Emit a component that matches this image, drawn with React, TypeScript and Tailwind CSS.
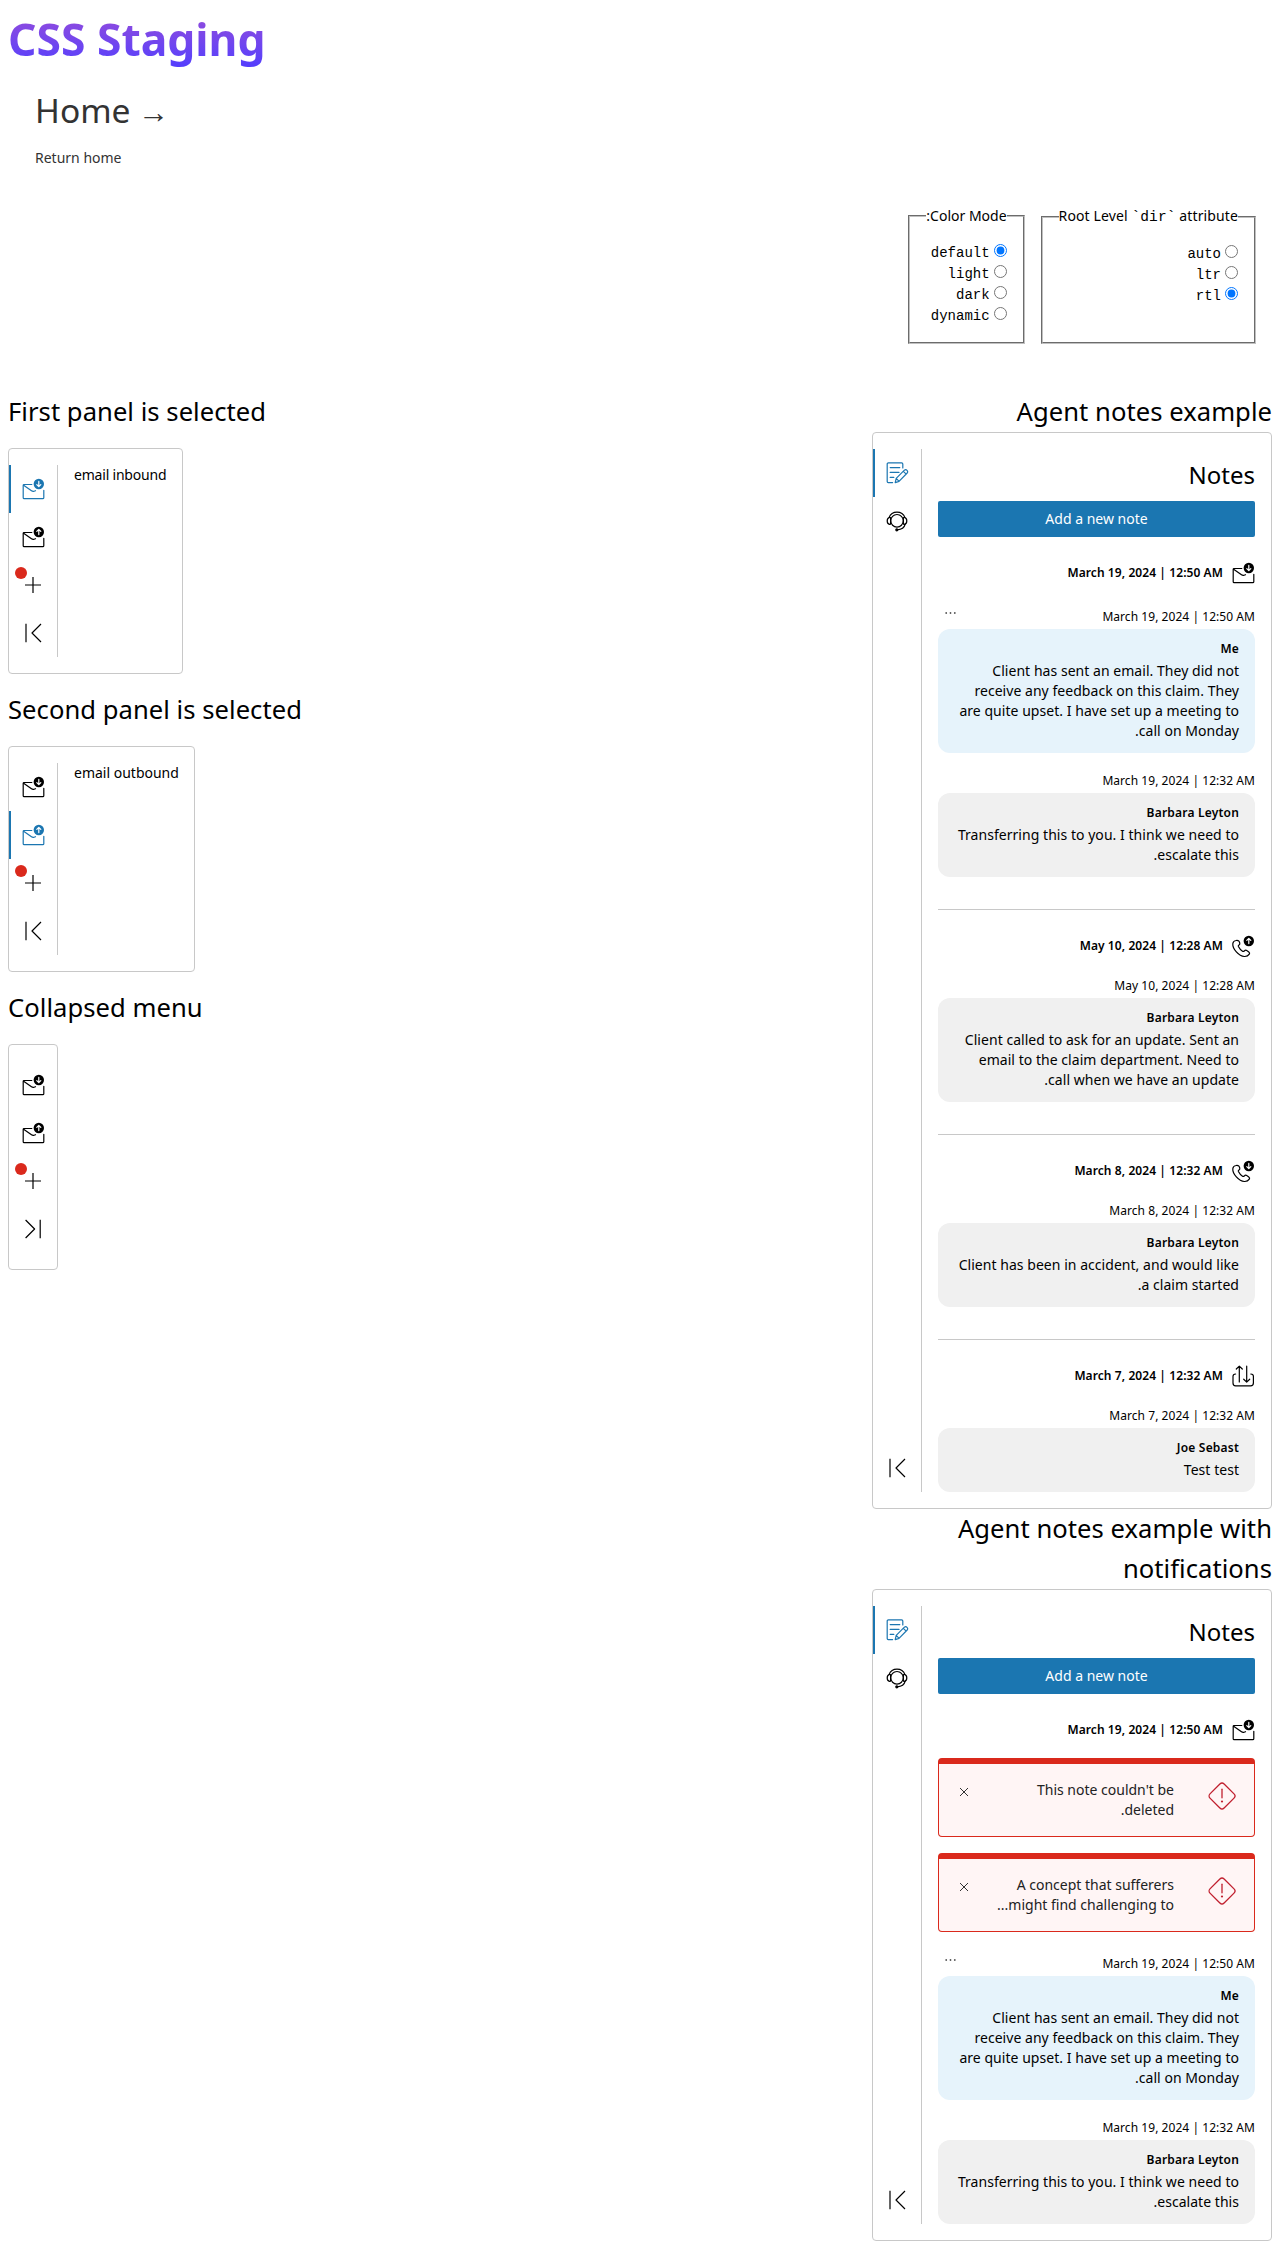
import type { ReactNode } from 'react';

function Svg({ children, size = 24 }: { children: ReactNode; size?: number }) {
  return (
    <svg
      width={size}
      height={size}
      viewBox="0 0 24 24"
      fill="none"
      stroke="currentColor"
      strokeWidth="1.2"
      strokeLinecap="round"
      strokeLinejoin="round"
      className="shrink-0"
    >
      {children}
    </svg>
  );
}

function Badge({ dir }: { dir: 'up' | 'down' }) {
  return (
    <>
      <circle cx="17.8" cy="7" r="5.2" fill="currentColor" stroke="none" />
      <path
        d={dir === 'down' ? 'M17.8 4.4v5M15.8 7.6l2 2 2-2' : 'M17.8 9.6v-5M15.8 6.4l2-2 2 2'}
        stroke="#fff"
      />
    </>
  );
}

function MailIcon({ dir }: { dir: 'up' | 'down' }) {
  return (
    <Svg>
      <path d="M10.8 7.5H3.2a1 1 0 0 0-1 1v12.2a1 1 0 0 0 1 1h18.6a1 1 0 0 0 1-1v-7.4" />
      <path d="M2.6 8.2l7.9 5.6q1.3.9 2.6.4l1.4-.5" />
      <Badge dir={dir} />
    </Svg>
  );
}

function PhoneIcon({ dir }: { dir: 'up' | 'down' }) {
  return (
    <Svg>
      <path d="M5 6.5C3.400 6.700 2 8 1.800 9.700c-.4 5 6 12.400 11.600 12.800 1.800.1 3.900-.8 4.900-2.300.5-.8.2-1.800-.5-2.300l-2-1.400c-.8-.6-1.800-.4-2.400.3-.5.6-1.200.9-1.900.4-1.600-1-3.200-2.800-4.100-4.600-.3-.7 0-1.300.6-1.700.8-.5 1-1.400.7-2.200l-.8-1.600C7.400 6.600 6.300 6.300 5 6.500z" />
      <Badge dir={dir} />
    </Svg>
  );
}

function TransferIcon() {
  return (
    <Svg>
      <path d="M4.600 10C2.800 10 2 10.600 2 12.300V19c0 1.800.9 2.800 2.600 2.800h15c1.700 0 2.800-1 2.800-2.800v-6.700c0-1.700-.8-2.300-2.600-2.300" />
      <path d="M8.300 18V2.200M5.300 5l3-2.900 3 2.900M15.700 2.200V18M12.700 15.200l3 2.900 3-2.900" />
    </Svg>
  );
}

function NotesIcon() {
  return (
    <Svg>
      <path d="M7.600 21.600H3.200a1 1 0 0 1-1-1V3a1.200 1.200 0 0 1 1.200-1.200h13.200A1.200 1.200 0 0 1 17.800 3v4" />
      <path d="M5.200 6.600h9.600M5.200 11.400h8.800M5.200 16.400h3.600" />
      <path d="M10.200 21.600l1-4.200 8.200-8.200a2 2 0 0 1 2.800 2.800L14 20.400zM11.400 17.600l2.500 2.500M18.400 10.400l2.500 2.500" />
    </Svg>
  );
}

function HeadsetIcon() {
  return (
    <Svg>
      <circle cx="12" cy="11.800" r="6.300" />
      <path d="M4 8.600a8.600 8.600 0 0 1 16 0M4.600 8.400C3 8.800 2.200 10 2.200 11.900s.8 3 2.400 3.400c.6.100 1-.2 1-.7V9c0-.5-.4-.8-1-.6zM19.400 8.400c1.600.4 2.400 1.600 2.400 3.500s-.8 3-2.400 3.400c-.6.100-1-.2-1-.7V9c0-.5.4-.8 1-.6z" />
      <path d="M20.200 15.200c-.8 3.400-3.400 5.400-8 5.600" />
      <circle cx="11.800" cy="20.800" r="1" fill="currentColor" />
    </Svg>
  );
}

function PlusIcon() {
  return (
    <Svg>
      <path d="M12 4v16M4 12h16" strokeLinecap="butt" />
    </Svg>
  );
}

function CollapseIcon() {
  return (
    <Svg>
      <path d="M5 2.800v18.400M20 3l-9 9 9 9" strokeLinecap="butt" />
    </Svg>
  );
}

function ExpandIcon() {
  return (
    <Svg>
      <path d="M19.200 2.800v18.400M4.600 3l9 9-9 9" strokeLinecap="butt" />
    </Svg>
  );
}

function Tab({ children, active, dot }: { children: ReactNode; active?: boolean; dot?: boolean }) {
  return (
    <button
      className={
        active
          ? 'relative flex size-12 items-center justify-center text-[#1b76b1]'
          : 'relative flex size-12 items-center justify-center text-black'
      }
    >
      {active && <span className="absolute inset-y-0 left-0 w-0.5 bg-[#1b76b1]" />}
      {dot && <span className="absolute top-1.5 left-1.5 size-3 rounded-full bg-[#da291c]" />}
      {children}
    </button>
  );
}

function Panel({ tabs, children }: { tabs: ReactNode; children?: ReactNode }) {
  return (
    <div dir="ltr" className="flex w-fit rounded border border-[#c8c8c8] py-4">
      <div className="flex w-12 flex-col">{tabs}</div>
      {children && <div className="border-l border-[#c8c8c8] px-4">{children}</div>}
    </div>
  );
}

function Heading({ children }: { children: ReactNode }) {
  return <h2 className="text-[25.600px] leading-10 tracking-[0.040px]">{children}</h2>;
}

function EmailPanel({ title, children, selected }: { title: string; children?: ReactNode; selected?: number }) {
  return (
    <section className="flex flex-col gap-4">
      <Heading>{title}</Heading>
      <Panel
        tabs={
          <>
            <Tab active={selected === 0}>
              <MailIcon dir="down" />
            </Tab>
            <Tab active={selected === 1}>
              <MailIcon dir="up" />
            </Tab>
            <Tab dot>
              <PlusIcon />
            </Tab>
            <Tab>{children ? <CollapseIcon /> : <ExpandIcon />}</Tab>
          </>
        }
      >
        {children}
      </Panel>
    </section>
  );
}

function Note({ date, author, text, mine }: { date: string; author: string; text: string; mine?: boolean }) {
  return (
    <div className="pt-[19px]">
      <div className={mine ? 'flex justify-between pt-1' : 'flex justify-between'}>
        <span className="text-xs leading-[18px] tracking-[0.050px]">{date}</span>
        {mine && (
          <button className="-mt-px ml-[7px] h-3 w-[11px] text-[#555]">
            <svg width="11" height="12" viewBox="0 0 11 12" fill="currentColor">
              <circle cx="1.200" cy="6" r="0.900" />
              <circle cx="5.500" cy="6" r="0.900" />
              <circle cx="9.800" cy="6" r="0.900" />
            </svg>
          </button>
        )}
      </div>
      <div
        className={
          mine
            ? 'mt-[3px] rounded-xl bg-[#e6f3fb] px-4 pt-[11px] pb-3'
            : 'mt-[3px] rounded-xl bg-[#f0f0f0] px-4 pt-[11px] pb-3'
        }
      >
        <p className="mb-[3px] text-xs leading-[18px] font-semibold tracking-[0.200px]">{author}</p>
        <p className="tracking-[0.040px] whitespace-pre-line">{text}</p>
      </div>
    </div>
  );
}

function Group({ date, icon, children }: { date: string; icon: ReactNode; children: ReactNode }) {
  return (
    <section className="border-[#c8c8c8] pt-6 not-last:mb-8 not-first:border-t">
      <header className="flex items-center gap-2">
        {icon}
        <h4 className="text-xs leading-[18px] font-semibold tracking-[0.080px]">{date}</h4>
      </header>
      {children}
    </section>
  );
}

function Alert({ lines }: { lines: string[] }) {
  return (
    <div
      role="alert"
      className="mt-4 flex rounded border border-t-6 border-[#da291c] bg-[#fff5f5] py-4 pr-[18px] pl-5 text-[#222]"
    >
      <svg
        width="28"
        height="32"
        viewBox="0 0 28 32"
        fill="none"
        stroke="#c01f2e"
        strokeWidth="1.300"
        strokeLinecap="round"
        className="shrink-0"
      >
        <rect x="4" y="6" width="20" height="20" rx="3" transform="rotate(45 14 16)" />
        <path d="M14 9.200v8.600" />
        <circle cx="14" cy="21.500" r="1.100" fill="#c01f2e" stroke="none" />
      </svg>
      <p className="mr-[34px] grow">
        {lines.map((line) => (
          <span key={line} className="block">
            {line}
          </span>
        ))}
      </p>
      <svg width="10" height="24" viewBox="0 0 10 24" stroke="#333" strokeWidth="1" className="shrink-0">
        <path d="M1 8l8 8M9 8l-8 8" />
      </svg>
    </div>
  );
}

function NotesPanel({ children }: { children: ReactNode }) {
  return (
    <Panel
      tabs={
        <>
          <Tab active>
            <NotesIcon />
          </Tab>
          <Tab>
            <HeadsetIcon />
          </Tab>
          <div className="mt-auto">
            <Tab>
              <CollapseIcon />
            </Tab>
          </div>
        </>
      }
    >
      <div dir="rtl" className="w-[317px]">
        <h3 className="text-2xl leading-[52px]">Notes</h3>
        <button className="block h-9 w-full rounded-xs bg-[#1b76b1] text-white">Add a new note</button>
        <div>{children}</div>
      </div>
    </Panel>
  );
}

function EmailNotes() {
  return (
    <>
      <Note
        mine
        date="March 19, 2024 | 12:50 AM"
        author="Me"
        text={
          'Client has sent an email. They did not\nreceive any feedback on this claim. They\nare quite upset. I have set up a meeting to\ncall on Monday.'
        }
      />
      <Note
        date="March 19, 2024 | 12:32 AM"
        author="Barbara Leyton"
        text={'Transferring this to you. I think we need to\nescalate this.'}
      />
    </>
  );
}

function Radios({ name, options, checked }: { name: string; options: string[]; checked: string }) {
  return (
    <>
      {options.map((option) => (
        <label
          key={option}
          className="flex h-[21px] items-start gap-1 font-['Liberation_Mono',monospace] leading-[21px]"
        >
          <input type="radio" name={name} defaultChecked={option === checked} className="mt-[1px] size-[13px]" />
          {option}
        </label>
      ))}
    </>
  );
}

export default function App() {
  return (
    <div
      dir="rtl"
      className="h-[2249px] bg-white p-2 font-['Noto_Sans',sans-serif] text-sm leading-5 text-black"
    >
      <div dir="ltr" className="flex h-[198px] flex-col items-start">
        <h1 className="bg-linear-to-b from-[#9a4ad8] to-[#4f3bff] bg-clip-text text-[44.400px] leading-[62px] font-bold text-transparent">
          CSS Staging
        </h1>
        <a className="px-[27px] pt-[19px] text-[#333]">
          <h2 className="text-[33.600px] leading-[42px]">
            Home <span className="-ml-px inline-block text-[31px]">→</span>
          </h2>
          <p className="mt-[16px] leading-[20px]">Return home</p>
        </a>
      </div>

      <div className="flex h-[186px] gap-4 px-4">
        <fieldset className="h-[138px] w-[215px] border-2 px-4 [border-color:#c0c0c0] [border-style:groove]">
          <legend className="h-[21px] leading-[20px] tracking-[0.120px] whitespace-nowrap">
            Root Level <code className="font-['Liberation_Mono',monospace] text-[14.500px]">`dir`</code> attribute
          </legend>
          <div className="pt-[17px]">
            <Radios name="dir" options={['auto', 'ltr', 'rtl']} checked="rtl" />
          </div>
        </fieldset>
        <fieldset className="h-[138px] w-[116px] border-2 px-4 [border-color:#c0c0c0] [border-style:groove]">
          <legend className="h-5 whitespace-nowrap">Color Mode:</legend>
          <div className="pt-[17px]">
            <Radios name="mode" options={['default', 'light', 'dark', 'dynamic']} checked="default" />
          </div>
        </fieldset>
      </div>

      <main className="flex items-start justify-between">
        <div className="w-[400px]">
          <Heading>Agent notes example</Heading>
          <NotesPanel>
            <Group date="March 19, 2024 | 12:50 AM" icon={<MailIcon dir="down" />}>
              <EmailNotes />
            </Group>
            <Group date="May 10, 2024 | 12:28 AM" icon={<PhoneIcon dir="up" />}>
              <Note
                date="May 10, 2024 | 12:28 AM"
                author="Barbara Leyton"
                text={
                  'Client called to ask for an update. Sent an\nemail to the claim department. Need to\ncall when we have an update.'
                }
              />
            </Group>
            <Group date="March 8, 2024 | 12:32 AM" icon={<PhoneIcon dir="down" />}>
              <Note
                date="March 8, 2024 | 12:32 AM"
                author="Barbara Leyton"
                text={'Client has been in accident, and would like\na claim started.'}
              />
            </Group>
            <Group date="March 7, 2024 | 12:32 AM" icon={<TransferIcon />}>
              <Note date="March 7, 2024 | 12:32 AM" author="Joe Sebast" text="Test test" />
            </Group>
          </NotesPanel>
          <Heading>Agent notes example with notifications</Heading>
          <NotesPanel>
            <Group date="March 19, 2024 | 12:50 AM" icon={<MailIcon dir="down" />}>
              <Alert lines={["This note couldn't be", 'deleted.']} />
              <Alert lines={['A concept that sufferers', 'might find challenging to...']} />
              <EmailNotes />
            </Group>
          </NotesPanel>
        </div>
        <div dir="ltr" className="flex flex-col gap-4">
          <EmailPanel title="First panel is selected" selected={0}>
            <p className="w-[92px] tracking-[-0.200px] whitespace-nowrap">email inbound</p>
          </EmailPanel>
          <EmailPanel title="Second panel is selected" selected={1}>
            <p className="w-[104px] whitespace-nowrap">email outbound</p>
          </EmailPanel>
          <EmailPanel title="Collapsed menu" />
        </div>
      </main>
    </div>
  );
}
